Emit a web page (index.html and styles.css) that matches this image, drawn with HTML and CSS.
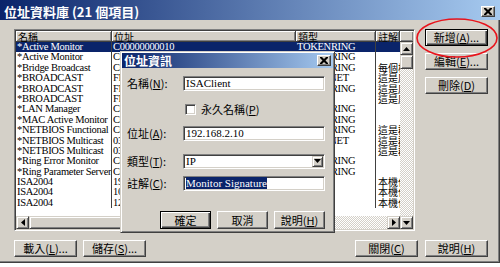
FILE: index.html
```html
<!DOCTYPE html>
<html lang="zh-Hant">
<head>
    <meta charset="UTF-8">
    <title>位址資料庫</title>
    <link rel="stylesheet" href="styles.css">
</head>
<body>
<div class="window">
    <div class="titlebar">
        <span class="title">位址資料庫 (21 個項目)</span>
        <span class="close-btn"><svg width="8" height="7" viewBox="0 0 8 7"><path d="M0 0h2l2 2 2-2h2v1l-2.5 2.5L8 6v1H6L4 5 2 7H0V6l2.5-2.5L0 1z" fill="#000"/></svg></span>
    </div>
    <div class="main">
        <div class="list">
            <div class="list-head">
                <div class="hcell c-name">名稱</div>
                <div class="hcell c-addr">位址</div>
                <div class="hcell c-type">類型</div>
                <div class="hcell c-note">註解</div>
                <div class="hcell c-fill"></div>
            </div>
            <div class="rows">
                <div class="row selected"><span class="c-name">*Active Monitor</span><span class="c-addr">C00000000010</span><span class="c-type">TOKENRING</span><span class="c-note"></span></div>
                <div class="row"><span class="c-name">*Active Monitor</span><span class="c-addr">C00000000001</span><span class="c-type">TOKENRING</span><span class="c-note"></span></div>
                <div class="row"><span class="c-name">*Bridge Broadcast</span><span class="c-addr">C00000000100</span><span class="c-type">TOKENRING</span><span class="c-note">每個橋接器</span></div>
                <div class="row"><span class="c-name">*BROADCAST</span><span class="c-addr">FFFFFFFFFFFF</span><span class="c-type">ETHERNET</span><span class="c-note">這是廣播</span></div>
                <div class="row"><span class="c-name">*BROADCAST</span><span class="c-addr">FFFFFFFFFFFF</span><span class="c-type">TOKENRING</span><span class="c-note">這是廣播</span></div>
                <div class="row"><span class="c-name">*BROADCAST</span><span class="c-addr">FFFFFFFFFFFF</span><span class="c-type">FDDI</span><span class="c-note">這是廣播</span></div>
                <div class="row"><span class="c-name">*LAN Manager</span><span class="c-addr">C00000002000</span><span class="c-type">TOKENRING</span><span class="c-note"></span></div>
                <div class="row"><span class="c-name">*MAC Active Monitor</span><span class="c-addr">C00000000001</span><span class="c-type">TOKENRING</span><span class="c-note"></span></div>
                <div class="row"><span class="c-name">*NETBIOS Functional</span><span class="c-addr">C00000000080</span><span class="c-type">TOKENRING</span><span class="c-note">這是群組</span></div>
                <div class="row"><span class="c-name">*NETBIOS Multicast</span><span class="c-addr">03000001</span><span class="c-type">ETHERNET</span><span class="c-note">這是群組</span></div>
                <div class="row"><span class="c-name">*NETBIOS Multicast</span><span class="c-addr">03000001</span><span class="c-type">FDDI</span><span class="c-note">這是群組</span></div>
                <div class="row"><span class="c-name">*Ring Error Monitor</span><span class="c-addr">C00000000008</span><span class="c-type">TOKENRING</span><span class="c-note"></span></div>
                <div class="row"><span class="c-name">*Ring Parameter Server</span><span class="c-addr">C00000000002</span><span class="c-type">TOKENRING</span><span class="c-note"></span></div>
                <div class="row"><span class="c-name">ISA2004</span><span class="c-addr">192.168.2.1</span><span class="c-type">IP</span><span class="c-note">本機位址</span></div>
                <div class="row"><span class="c-name">ISA2004</span><span class="c-addr">10.0.0.1</span><span class="c-type">IP</span><span class="c-note">本機位址</span></div>
                <div class="row"><span class="c-name">ISA2004</span><span class="c-addr">127.0.0.1</span><span class="c-type">IP</span><span class="c-note">本機位址</span></div>
            </div>
            <div class="vscroll">
                <span class="sbtn"><svg width="7" height="4" viewBox="0 0 7 4"><path d="M3.5 0L7 4H0z"/></svg></span>
                <span class="sthumb"></span>
                <span class="strack"></span>
                <span class="sbtn"><svg width="7" height="4" viewBox="0 0 7 4"><path d="M0 0h7L3.5 4z"/></svg></span>
            </div>
            <div class="hscroll">
                <span class="sbtn"><svg width="4" height="7" viewBox="0 0 4 7"><path d="M4 0v7L0 3.5z"/></svg></span>
                <span class="sthumb wide"></span>
                <span class="strack"></span>
                <span class="sbtn"><svg width="4" height="7" viewBox="0 0 4 7"><path d="M0 0l4 3.5L0 7z"/></svg></span>
            </div>
        </div>
        <div class="side">
            <button class="btn default">新增(<u>A</u>)...</button>
            <button class="btn">編輯(<u>E</u>)...</button>
            <button class="btn">刪除(<u>D</u>)</button>
        </div>
    </div>
    <div class="bottom">
        <button class="btn">載入(<u>L</u>)...</button>
        <button class="btn">儲存(<u>S</u>)...</button>
        <span class="spacer"></span>
        <button class="btn">關閉(<u>C</u>)</button>
        <button class="btn">說明(<u>H</u>)</button>
    </div>

    <div class="dialog">
        <div class="titlebar small">
            <span class="title">位址資訊</span>
            <span class="close-btn"><svg width="8" height="7" viewBox="0 0 8 7"><path d="M0 0h2l2 2 2-2h2v1l-2.5 2.5L8 6v1H6L4 5 2 7H0V6l2.5-2.5L0 1z" fill="#000"/></svg></span>
        </div>
        <div class="form">
            <div class="form-row">
                <label class="form-label">名稱(<u>N</u>):</label>
                <span class="field">ISAClient</span>
            </div>
            <div class="form-row check-row">
                <span class="form-label"></span>
                <span class="checkbox"></span>
                <label class="check-label">永久名稱(<u>P</u>)</label>
            </div>
            <div class="form-row addr-row">
                <label class="form-label">位址(<u>A</u>):</label>
                <span class="field">192.168.2.10</span>
            </div>
            <div class="form-row type-row">
                <label class="form-label">類型(<u>T</u>):</label>
                <span class="field select">IP<span class="sbtn drop"><svg width="7" height="4" viewBox="0 0 7 4"><path d="M0 0h7L3.5 4z"/></svg></span></span>
            </div>
            <div class="form-row note-row">
                <label class="form-label">註解(<u>C</u>):</label>
                <span class="field"><span class="sel-text">Monitor Signature</span></span>
            </div>
            <div class="dialog-buttons">
                <button class="btn default">確定</button>
                <button class="btn">取消</button>
                <button class="btn">說明(<u>H</u>)</button>
            </div>
        </div>
    </div>

    <svg class="mark" width="86" height="42" viewBox="0 0 86 42">
        <ellipse cx="43" cy="21" rx="40" ry="19" fill="none" stroke="#e8141c" stroke-width="1.6"/>
    </svg>
</div>
</body>
</html>
```

FILE: styles.css
```css
body {
    margin: 0;
    background: #fff;
    font-family: "Liberation Serif", "Noto Sans CJK TC", serif;
    font-size: 11px;
    color: #000;
}
.window {
    position: relative;
    width: 500px;
    height: 263px;
    box-sizing: border-box;
    background: #d4d0c8;
    box-shadow: inset -1px -1px #404040, inset -2px -2px #808080;
    display: flex;
    flex-direction: column;
}
.titlebar {
    height: 20px;
    box-sizing: border-box;
    padding: 3px 5px 1px 4px;
    display: flex;
    align-items: center;
    justify-content: space-between;
    background: linear-gradient(to right, #0a246a, #a6caf0);
    color: #fff;
}
.title {
    font-family: "Noto Sans CJK TC", "Liberation Sans", sans-serif;
    font-weight: bold;
    font-size: 13px;
    line-height: 15px;
}
.close-btn {
    width: 14px;
    height: 11px;
    box-sizing: border-box;
    display: flex;
    align-items: center;
    justify-content: center;
    background: #d4d0c8;
    border: 1px solid;
    border-color: #fff #404040 #404040 #fff;
    box-shadow: inset -1px -1px #808080;
}
.main {
    display: flex;
    gap: 10px;
    padding: 9px 0 0 14px;
}

/* list view */
.list {
    width: 401px;
    height: 202px;
    box-sizing: border-box;
    background: #fff;
    border: 1px solid;
    border-color: #808080 #fff #fff #808080;
    box-shadow: inset 1px 1px #404040, inset -1px -1px #d4d0c8;
    padding: 1px;
    display: grid;
    grid-template-columns: 384px 13px;
    grid-template-rows: 11px 1fr 13px;
}
.list-head {
    grid-column: 1 / 3;
    display: flex;
}
.hcell {
    box-sizing: border-box;
    height: 11px;
    padding-left: 2px;
    font-family: "Noto Sans CJK TC", sans-serif;
    font-size: 10px;
    line-height: 11px;
    background: #d4d0c8;
    border-right: 1px solid #404040;
    border-bottom: 1px solid #404040;
    box-shadow: inset 1px 1px #fff, inset -1px -1px #808080;
}
.c-name { width: 96px; }
.c-addr { width: 184px; }
.c-type { width: 80px; }
.c-note { width: 24px; }
.hcell.c-fill { flex: 1; border-right: 0; }
.rows {
    overflow: hidden;
}
.row {
    display: flex;
    height: 10.4px;
    font-size: 10.5px;
    line-height: 10.4px;
    letter-spacing: -0.3px;
    white-space: nowrap;
}
.row span {
    box-sizing: border-box;
    padding-left: 1px;
    overflow: hidden;
}
.row .c-name,
.row .c-type {
    border-right: 1px solid #404040;
}
.row .c-note {
    font-family: "Noto Sans CJK TC", sans-serif;
    font-size: 10px;
    letter-spacing: 0;
    padding-left: 2px;
}
.row.selected {
    background: #0a246a;
    color: #fff;
}

/* scroll bars */
.vscroll {
    grid-row: 2 / 4;
    grid-column: 2;
    display: flex;
    flex-direction: column;
}
.hscroll {
    display: flex;
}
.sbtn {
    flex: none;
    width: 13px;
    height: 13px;
    box-sizing: border-box;
    display: flex;
    align-items: center;
    justify-content: center;
    background: #d4d0c8;
    border: 1px solid;
    border-color: #d4d0c8 #404040 #404040 #d4d0c8;
    box-shadow: inset 1px 1px #fff, inset -1px -1px #808080;
}
.sthumb {
    flex: none;
    height: 14px;
    box-sizing: border-box;
    background: #d4d0c8;
    border: 1px solid;
    border-color: #d4d0c8 #404040 #404040 #d4d0c8;
    box-shadow: inset 1px 1px #fff, inset -1px -1px #808080;
}
.sthumb.wide {
    width: 170px;
    height: 13px;
}
.strack {
    flex: 1;
    background: repeating-conic-gradient(#fff 0 25%, #d4d0c8 0 50%) 0 0 / 2px 2px;
}

/* buttons */
.btn {
    width: 63px;
    height: 17px;
    padding: 0;
    box-sizing: border-box;
    font-family: "Noto Sans CJK TC", "Liberation Sans", sans-serif;
    font-size: 11px;
    line-height: 13px;
    color: #000;
    background: #d4d0c8;
    border: 1px solid;
    border-color: #fff #404040 #404040 #fff;
    box-shadow: inset -1px -1px #808080;
}
.btn.default {
    border-color: #000;
    box-shadow: inset 1px 1px #fff, inset -1px -1px #404040, inset -2px -2px #808080;
}
.side {
    display: flex;
    flex-direction: column;
    gap: 7px;
}
.bottom {
    display: flex;
    gap: 6px;
    padding: 9px 12px 0 14px;
}
.bottom .spacer {
    flex: 1;
}
.bottom .btn + .btn:last-child {
    margin-left: 1px;
}

/* overlay dialog */
.dialog {
    position: absolute;
    left: 120px;
    top: 51px;
    width: 215px;
    height: 182px;
    box-sizing: border-box;
    padding: 1px;
    background: #d4d0c8;
    border: 1px solid;
    border-color: #d4d0c8 #404040 #404040 #d4d0c8;
    box-shadow: inset 1px 1px #fff, inset -1px -1px #808080;
}
.titlebar.small {
    height: 15px;
    padding: 0 2px 0 2px;
}
.titlebar.small .title {
    font-size: 12px;
    line-height: 14px;
}
.form {
    padding: 7px 0 0 5px;
    font-family: "Noto Sans CJK TC", "Liberation Sans", sans-serif;
}
.form-row {
    display: flex;
    align-items: center;
}
.form-label {
    width: 56px;
    flex: none;
    font-size: 11px;
}
.field {
    position: relative;
    width: 142px;
    height: 15px;
    box-sizing: border-box;
    padding-left: 2px;
    font-family: "Liberation Serif", serif;
    font-size: 11px;
    line-height: 12px;
    background: #fff;
    border: 1px solid;
    border-color: #808080 #fff #fff #808080;
    box-shadow: inset 1px 1px #404040, inset -1px -1px #d4d0c8;
}
.check-row {
    margin-top: 10px;
}
.checkbox {
    width: 11px;
    height: 11px;
    box-sizing: border-box;
    margin-left: 2px;
    background: #fff;
    border: 1px solid;
    border-color: #808080 #fff #fff #808080;
    box-shadow: inset 1px 1px #404040, inset -1px -1px #d4d0c8;
}
.check-label {
    margin-left: 5px;
    font-size: 11px;
}
.addr-row {
    margin-top: 8px;
}
.type-row {
    margin-top: 12px;
}
.note-row {
    margin-top: 6px;
}
.select .drop {
    position: absolute;
    right: 1px;
    top: 1px;
    width: 11px;
    height: 11px;
}
.sel-text {
    background: #0a246a;
    color: #fff;
}
.dialog-buttons {
    display: flex;
    gap: 6px;
    justify-content: flex-end;
    padding-right: 8px;
    margin-top: 20px;
}
.dialog-buttons .btn {
    width: 51px;
    height: 18px;
}
.mark {
    position: absolute;
    left: 414px;
    top: 17px;
}
```
